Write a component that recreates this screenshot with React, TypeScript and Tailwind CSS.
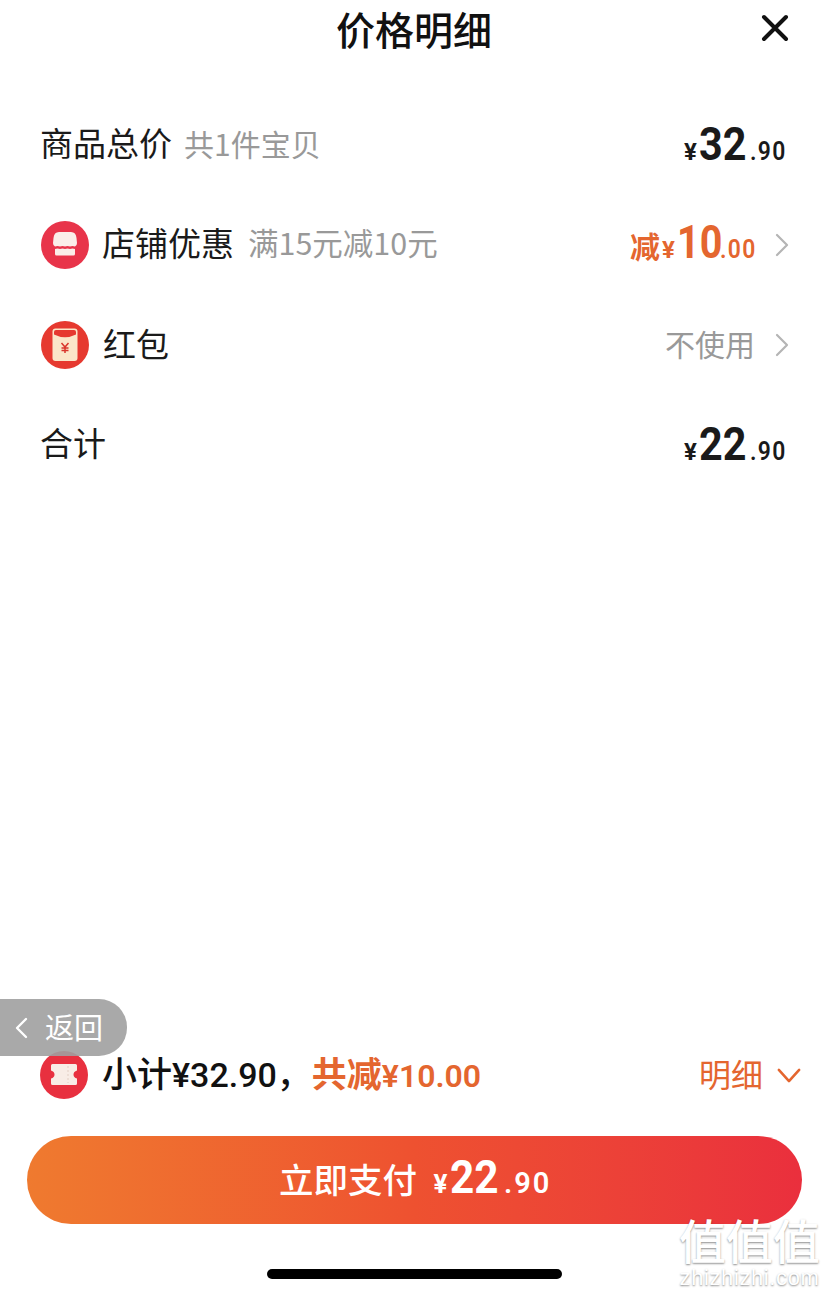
import React from "react";

const cjk = { fontFamily: '"Noto Sans CJK SC", sans-serif' };
const num = { fontFamily: 'Roboto, "Noto Sans CJK SC", sans-serif' };

function Chevron({ className }: { className: string }) {
  return (
    <svg viewBox="0 0 16 24" className={className} fill="none" stroke="currentColor" strokeWidth="2.2" strokeLinecap="round" strokeLinejoin="round">
      <path d="M3 2 L13 12 L3 22" />
    </svg>
  );
}

function Price({ big, small, bigClass = "w-[51px] scale-x-[0.88]" }: { big: string; small: string; bigClass?: string }) {
  return (
    <span className="flex items-baseline font-bold" style={num}>
      <span className="inline-block w-[15px] text-[24px]">¥</span>
      <span className={`inline-block ${bigClass} origin-left text-[47px] leading-none`}>{big}</span>
      <span className="inline-block w-[36px] origin-left scale-x-[0.88] text-[26px] font-semibold tracking-[1.500px] whitespace-nowrap">.{small}</span>
    </span>
  );
}

function ShopIcon() {
  return (
    <svg viewBox="0 0 48 48" className="w-12 h-12 shrink-0">
      <circle cx="24" cy="24" r="24" fill="#e8344a" />
      <path d="M18 11 H30 Q35 11 35.500 17 L36 22 Q36 25 34 25.500 Q31.500 24.500 29 25.500 Q26.500 24.500 24 25.500 Q21.500 24.500 19 25.500 Q16.500 24.500 14 25.500 Q12 25 12 22 L12.500 17 Q13 11 18 11 Z" fill="#fbeee9" />
      <path d="M14 28 Q16.500 27 19 28 Q21.500 27 24 28 Q26.500 27 29 28 Q31.500 27 34 28 V33 Q34 34.500 32.500 34.500 H15.500 Q14 34.500 14 33 Z" fill="#fbeee9" />
    </svg>
  );
}

function PacketIcon() {
  return (
    <svg viewBox="0 0 48 48" className="w-12 h-12 shrink-0">
      <circle cx="24" cy="24" r="24" fill="#e6392f" />
      <rect x="11.500" y="7.500" width="25" height="32.500" rx="3" fill="#fbe6c8" />
      <path d="M13 11 Q13 9 15 9 H33 Q35 9 35 11 V13.500 Q24 19 13 13.500 Z" fill="#e6392f" />
      <path d="M20.500 22 L24 26 L27.500 22 M24 26 V32 M20.500 27 H27.500 M20.500 29.500 H27.500" fill="none" stroke="#d9362c" strokeWidth="1.500" />
    </svg>
  );
}

function TicketIcon() {
  return (
    <svg viewBox="0 0 48 48" className="w-12 h-12 shrink-0">
      <circle cx="24" cy="24" r="24" fill="#e8303f" />
      <path d="M12.500 13 H35.500 Q37 13 37 14.500 V19.500 Q33.500 20.500 33.500 23.500 Q33.500 26.500 37 27.500 V32.500 Q37 34 35.500 34 H12.500 Q11 34 11 32.500 V27.500 Q14.500 26.500 14.500 23.500 Q14.500 20.500 11 19.500 V14.500 Q11 13 12.500 13 Z" fill="#f8ede6" />
      <path d="M28 15 V32" stroke="#e9d9d0" strokeWidth="1.500" strokeDasharray="2 2" />
    </svg>
  );
}

export default function App() {
  return (
    <div className="relative flex flex-col h-[1296px] w-[828px] bg-white overflow-hidden text-[#1a1a1a]" style={cjk}>
      <header className="relative flex items-center justify-center h-[60px] shrink-0 pb-[4px]">
        <h1 className="text-[39px] font-medium leading-none text-[#111111]">价格明细</h1>
        <svg viewBox="0 0 30 30" className="absolute left-[760px] top-[13px] w-[30px] h-[30px]" fill="none" stroke="#111" strokeWidth="4" strokeLinecap="round">
          <path d="M4 4 L26 26 M26 4 L4 26" />
        </svg>
      </header>

      <div className="flex flex-col mt-[35px] pl-[41px] pr-[38px]">
        <div className="flex items-center h-[100px]">
          <span className="text-[33px] -ml-[1px] mb-[4px]">商品总价</span>
          <span className="text-[30px] text-[#999999] ml-[12px] mb-[4px]">共1件宝贝</span>
          <span className="ml-auto mr-[4px] text-[#1a1a1a]"><Price big="32" small="90" /></span>
        </div>
        <div className="flex items-center h-[100px]">
          <ShopIcon />
          <span className="text-[33px] ml-[13px] mb-[4px]">店铺优惠</span>
          <span className="text-[30.500px] text-[#999999] ml-[14px] mb-[4px]">满15元减10元</span>
          <span className="ml-auto flex items-baseline text-[#e4662f] mb-[4px]">
            <span className="text-[30px] font-bold mr-[2px]">减</span>
            <Price big="10" small="00" bigClass="w-[43px] scale-x-[0.84]" />
          </span>
          <Chevron className="w-[16px] h-[24px] ml-[18px] text-[#b5b5b5]" />
        </div>
        <div className="flex items-center h-[100px]">
          <PacketIcon />
          <span className="text-[33px] ml-[14px] mb-[2px]">红包</span>
          <span className="ml-auto text-[30px] text-[#999999] mb-[4px] mr-[1px]">不使用</span>
          <Chevron className="w-[16px] h-[24px] ml-[18px] text-[#b5b5b5]" />
        </div>
        <div className="flex items-center h-[100px]">
          <span className="text-[33px] -ml-[1px] mb-[4px]">合计</span>
          <span className="ml-auto mr-[4px] text-[#1a1a1a]"><Price big="22" small="90" /></span>
        </div>
      </div>

      <div className="flex-1" />

      <div className="flex items-center h-[50px] pl-[40px] pr-[27px] mb-[36px]">
        <TicketIcon />
        <span className="text-[34px] font-medium ml-[14px] mb-[4px] text-[#111111]" style={num}>
          <span className="text-[35px]" style={cjk}>小计</span>¥32.90<span style={cjk}>，</span>
        </span>
        <span className="text-[32px] font-semibold text-[#e4662f] mb-[4px] ml-[1px]" style={num}>
          <span className="text-[35px] font-bold" style={cjk}>共减</span>¥10.00
        </span>
        <span className="ml-auto text-[32px] text-[#e4662f] mb-[4px]">明细</span>
        <svg viewBox="0 0 26 16" className="w-[24px] h-[15px] ml-[14px] text-[#e4662f]" fill="none" stroke="currentColor" strokeWidth="2.800" strokeLinecap="round" strokeLinejoin="round">
          <path d="M2 2 L13 14 L24 2" />
        </svg>
      </div>

      <div className="px-[27px] shrink-0">
        <button className="flex items-center justify-center w-[775px] h-[88px] rounded-full bg-gradient-to-r from-[#ef7a2f] via-[#ee5130] to-[#ea2f3d] text-white">
          <span className="text-[34.500px] font-medium leading-none mb-[4px]" style={cjk}>立即支付</span>
          <span className="flex items-baseline font-bold ml-[14px] mb-[2px]" style={num}>
            <span className="inline-block w-[19px] text-[26px]">¥</span>
            <span className="inline-block w-[54px] origin-left scale-x-[0.9] text-[47px] leading-none">22</span>
            <span className="inline-block w-[46px] text-[29px] font-semibold tracking-[2px] whitespace-nowrap">.90</span>
          </span>
        </button>
      </div>

      <div className="flex justify-center pt-[45px] pb-[17px]">
        <div className="w-[295px] h-[10px] rounded-full bg-black" />
      </div>

      <div className="absolute left-0 top-[999px] flex items-center w-[127px] h-[57px] rounded-r-[28px] bg-[#a0a0a0]/90 text-white">
        <svg viewBox="0 0 14 22" className="w-[14px] h-[22px] ml-[14px]" fill="none" stroke="currentColor" strokeWidth="2.400" strokeLinecap="round" strokeLinejoin="round">
          <path d="M12 2 L3 11 L12 20" />
        </svg>
        <span className="text-[29px] ml-[17px] leading-none mb-[3px]">返回</span>
      </div>

      <div className="absolute left-[679px] top-[1214px] flex flex-col items-center text-white [text-shadow:0_1px_2px_rgba(0,0,0,0.45)]">
        <span className="text-[47px] leading-[50px] h-[50px] font-medium">值值值</span>
        <span className="text-[22px] leading-none mt-[3px] tracking-[0.600px]" style={{ fontFamily: '"Liberation Sans", sans-serif' }}>zhizhizhi.com</span>
      </div>
    </div>
  );
}
